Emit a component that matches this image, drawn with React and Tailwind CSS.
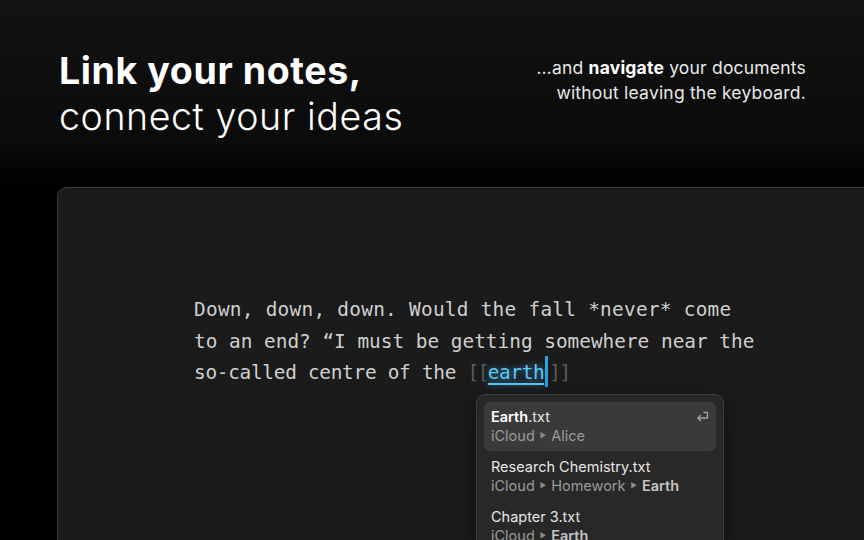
const sans = { fontFamily: "Inter, 'Noto Sans', sans-serif" };
const mono = { fontFamily: "'DejaVu Sans Mono', 'Liberation Mono', monospace" };

const results = [
  { title: [["Earth", true], [".txt", false]], path: [["iCloud", false], ["Alice", false]], active: true },
  { title: [["Research Chemistry.txt", false]], path: [["iCloud", false], ["Homework", false], ["Earth", true]] },
  { title: [["Chapter 3.txt", false]], path: [["iCloud", false], ["Earth", true]] },
];

// small return-key glyph shown on the highlighted result
function ReturnKey() {
  return (
    <svg
      className="absolute right-[7px] top-[9px]"
      width="13"
      height="11"
      viewBox="0 0 13 11"
      fill="none"
      stroke="#a3a3a3"
      strokeWidth="1.3"
      strokeLinecap="round"
      strokeLinejoin="round"
    >
      <path d="M8 1.5h3.5v5.5H2" />
      <path d="M4.5 4.5L2 7l2.5 2.5" />
    </svg>
  );
}

function ResultItem({ item }) {
  return (
    <div
      className={`relative rounded-md px-[7px] pt-[5px] pb-[6px] ${item.active ? "bg-[#3a3a3a]" : ""}`}
    >
      <div className="text-[14.5px] leading-[19px] text-[#e6e6e6]">
        {item.title.map(([t, b], i) => (
          <span key={i} className={b ? "font-semibold text-white" : ""}>
            {t}
          </span>
        ))}
      </div>
      <div className="flex items-center text-[14.5px] leading-[19px] text-[#9a9a9a]">
        {item.path.map(([t, b], i) => (
          <span key={i} className="flex items-center">
            {i > 0 && <span className="mx-[5px] text-[7px] text-[#8a8a8a]">▶</span>}
            <span className={b ? "font-semibold text-[#c4c4c4]" : ""}>{t}</span>
          </span>
        ))}
      </div>
      {item.active && <ReturnKey />}
    </div>
  );
}

export default function App() {
  return (
    <div
      className="w-[864px] h-[540px] overflow-hidden bg-gradient-to-b from-[#131313] from-0% via-[#0a0a0a] via-[28%] to-black to-[40%] flex flex-col"
      style={sans}
    >
      <header className="flex justify-between pl-[59px] pr-[58px] pt-[48px] h-[187px]">
        <h1 className="text-[37.5px] leading-[46px] text-white tracking-[0.6px]">
          <span className="font-bold">Link your notes,</span>
          <br />
          <span className="font-light">connect your ideas</span>
        </h1>
        <p className="text-right text-[17.5px] leading-[25px] text-[#e8e8e8] pt-[7px] tracking-[0.2px]">
          …and <span className="font-bold text-white">navigate</span> your documents
          <br />
          without leaving the keyboard.
        </p>
      </header>

      <main className="flex-1 ml-[57px] rounded-tl-[10px] border-l border-t border-[#3b3b3b] bg-[#1b1b1b] pl-[136px] pt-[106px]">
        <div className="text-[19.4px] leading-[31.5px] text-[#cfcfcf] whitespace-pre" style={mono}>
          <div className="tracking-[0.27px]">Down, down, down. Would the fall *never* come</div>
          <div>to an end? “I must be getting somewhere near the</div>
          <div className="relative inline-block">
            <span className="tracking-[-0.28px]">so-called centre of the </span>
            <span className="text-[#5c5c5c] tracking-[-1.5px]">[[</span>
            <span className="text-[#5cc8f5] underline underline-offset-[4px] decoration-[1.5px] tracking-[-0.4px] [text-shadow:0_0_6px_rgba(60,180,240,0.7)]">
              earth
            </span>
            <span className="inline-block w-[3px] h-[31px] bg-[#20a4ee] align-middle -mt-[4px] mx-[1px]" />
            <span className="text-[#5c5c5c] tracking-[-1.5px]">]]</span>

            <div
              className="absolute left-[282px] top-[37px] w-[248px] rounded-[9px] border border-[#3e3e3e] bg-[#282828] p-[7px] shadow-[0_8px_24px_rgba(0,0,0,0.5)] whitespace-normal flex flex-col gap-[1px]"
              style={sans}
            >
              {results.map((item, i) => (
                <ResultItem key={i} item={item} />
              ))}
            </div>
          </div>
        </div>
      </main>
    </div>
  );
}
